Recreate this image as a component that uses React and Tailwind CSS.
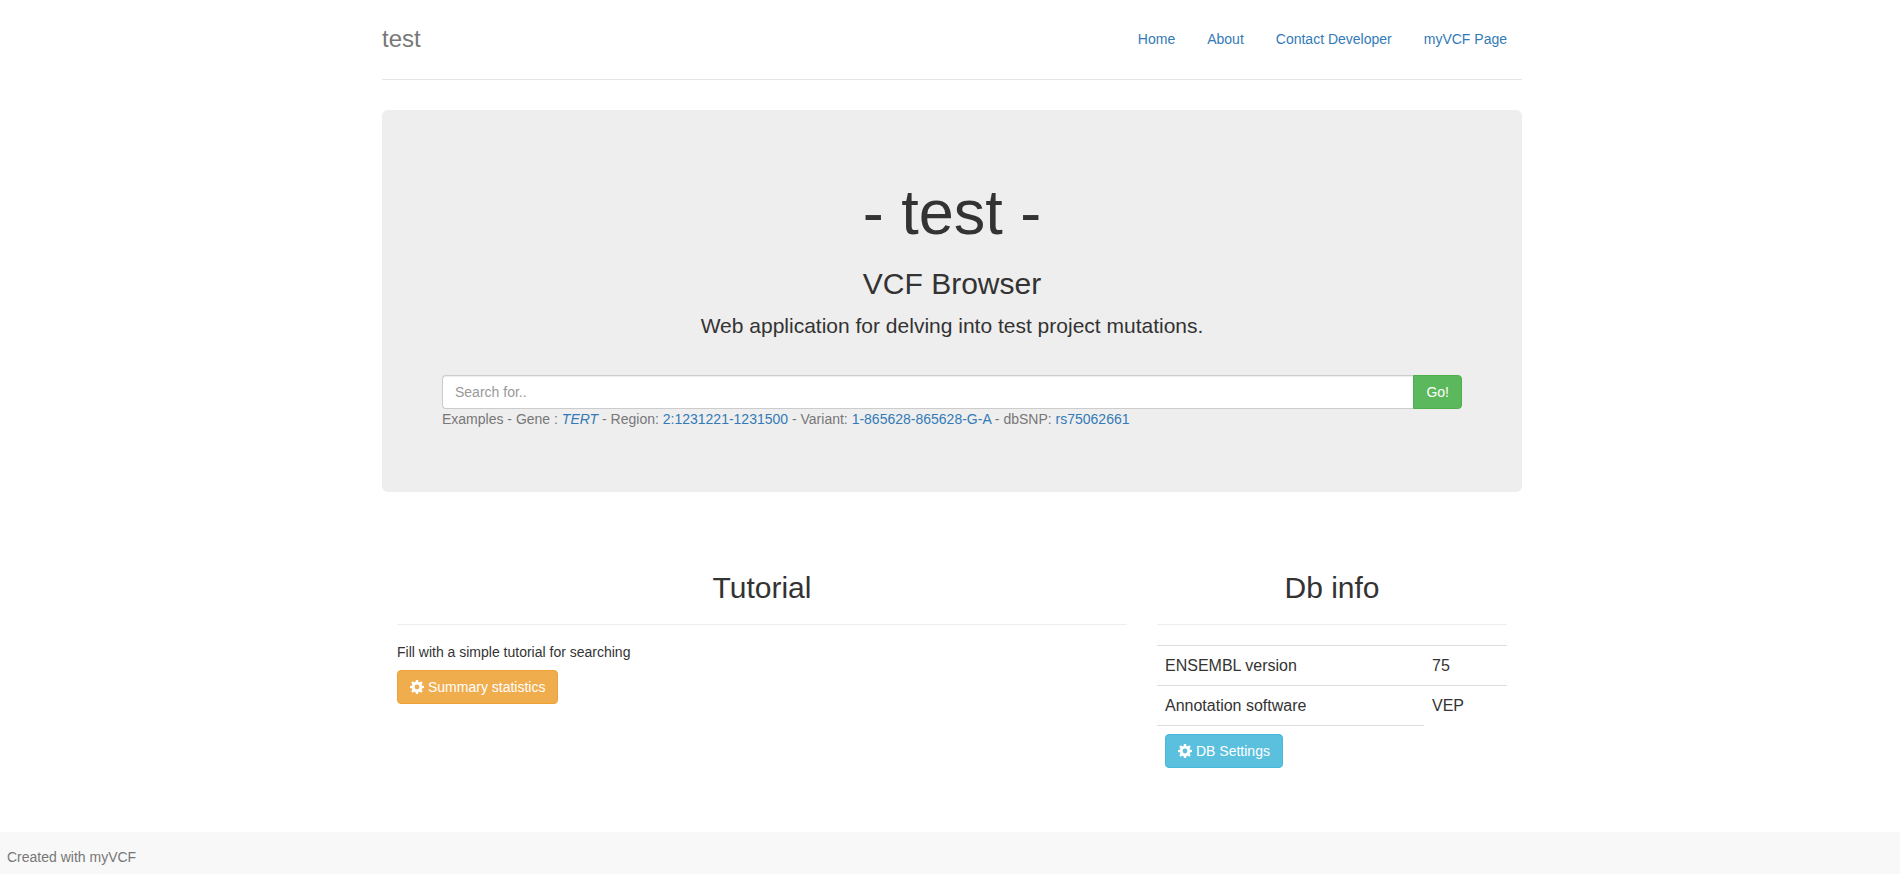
import React from "react";

const navLinks = ["Home", "About", "Contact Developer", "myVCF Page"];
const teeth = [0, 45, 90, 135, 180, 225, 270, 315];

function Cog() {
  return (
    <svg viewBox="0 0 14 14" className="h-3.5 w-3.5 shrink-0" aria-hidden="true">
      <circle cx="7" cy="7" r="3.8" fill="none" stroke="currentColor" strokeWidth="2.8" />
      {teeth.map((a) => (
        <path key={a} d="M5.5 2.6 L5.9 0 H8.1 L8.5 2.6 Z" fill="currentColor" transform={`rotate(${a} 7 7)`} />
      ))}
    </svg>
  );
}

function Example({ children }) {
  return (
    <a href="#" className="text-[#337ab7] hover:underline">
      {children}
    </a>
  );
}

function SectionTitle({ children }) {
  return <h2 className="mb-[17px] border-b border-[#eee] pb-5 text-center text-[30px] leading-[33px]">{children}</h2>;
}

export default function App() {
  return (
    <div className="flex min-h-screen flex-col bg-white font-['Liberation_Sans',Arial,sans-serif] text-sm leading-5 text-[#333]">
      <div className="pl-1">
        <div className="mx-auto max-w-[1140px] pt-[19px]">
          <header className="mb-[30px] flex items-center justify-between border-b border-[#e5e5e5] pb-5">
            <h3 className="text-2xl leading-10 text-[#777]">test</h3>
            <nav className="flex gap-0.5">
              {navLinks.map((label) => (
                <a key={label} href="#" className="px-[15px] py-2.5 text-[#337ab7]">
                  {label}
                </a>
              ))}
            </nav>
          </header>

          <main>
            <section className="rounded-md bg-[#eee] px-[60px] pt-[68px] pb-[63px]">
              <div className="text-center">
                <h1 className="text-[63px] leading-[69px]">- test -</h1>
                <h2 className="mt-5 text-[30px] leading-[33px]">VCF Browser</h2>
                <p className="mt-[11px] text-[21px] leading-[30px]">
                  Web application for delving into test project mutations.
                </p>
              </div>
              <form className="mt-[34px] flex" onSubmit={(e) => e.preventDefault()}>
                <input
                  type="text"
                  aria-label="Search"
                  placeholder="Search for.."
                  className="h-[34px] min-w-0 flex-1 rounded-l border border-r-0 border-[#ccc] bg-white px-3 py-1.5 text-[#555] shadow-[inset_0_1px_1px_rgba(0,0,0,0.075)] placeholder:text-[#999]"
                />
                <button type="submit" className="h-[34px] rounded-r border border-[#4cae4c] bg-[#5cb85c] px-3 text-white">
                  Go!
                </button>
              </form>
              <p className="text-[#777]">
                Examples - Gene : <Example><i>TERT</i></Example> - Region: <Example>2:1231221-1231500</Example> - Variant:{" "}
                <Example>1-865628-865628-G-A</Example> - dbSNP: <Example>rs75062661</Example>
              </p>
            </section>

            <div className="grid grid-cols-3 pt-[79px] pb-14">
              <section className="col-span-2 px-[15px]">
                <SectionTitle>Tutorial</SectionTitle>
                <p>Fill with a simple tutorial for searching</p>
                <button type="button" className="mt-2 flex h-[34px] items-center gap-1 rounded border border-[#eea236] bg-[#f0ad4e] px-3 text-white">
                  <Cog />
                  Summary statistics
                </button>
              </section>
              <section className="px-[15px]">
                <SectionTitle>Db info</SectionTitle>
                <table className="mt-5 w-full text-base leading-[23px]">
                  <tbody>
                    <tr>
                      <th scope="row" className="border-t border-[#ddd] p-2 text-left font-normal">ENSEMBL version</th>
                      <td className="w-[83px] border-t border-[#ddd] p-2">75</td>
                    </tr>
                    <tr>
                      <th scope="row" className="border-t border-[#ddd] p-2 text-left font-normal">Annotation software</th>
                      <td className="border-t border-[#ddd] p-2">VEP</td>
                    </tr>
                    <tr>
                      <td className="border-t border-[#ddd] p-2">
                        <button type="button" className="flex h-[34px] items-center gap-1 rounded border border-[#46b8da] bg-[#5bc0de] px-3 text-sm text-white">
                          <Cog />
                          DB Settings
                        </button>
                      </td>
                    </tr>
                  </tbody>
                </table>
              </section>
            </div>
          </main>
        </div>
      </div>
      <footer className="flex-1 bg-[#f8f8f8] px-[7px] pt-[15px] pb-1.5 text-[#777]">Created with myVCF</footer>
    </div>
  );
}
